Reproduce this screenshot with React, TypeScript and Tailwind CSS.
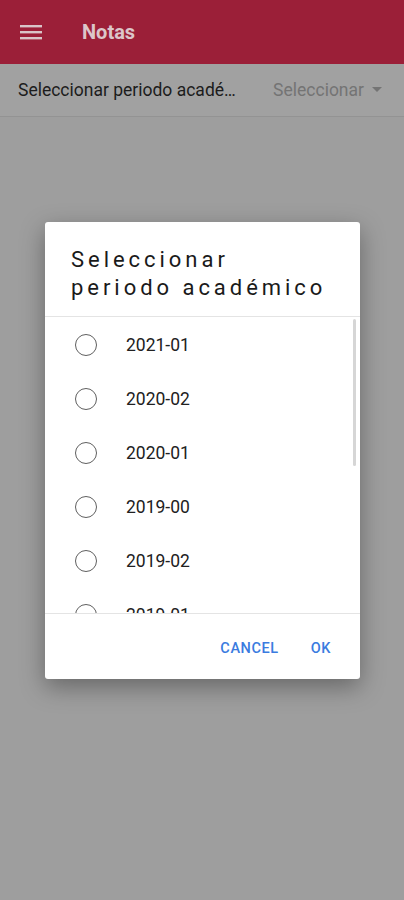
import { useState } from 'react'

const periods = ['2021-01', '2020-02', '2020-01', '2019-00', '2019-02', '2019-01', '2018-02', '2018-01']

export default function App() {
  const [selected, setSelected] = useState<string | null>(null)

  return (
    <main className="relative w-[404px] h-[900px] overflow-hidden bg-[#9e9e9e] font-['Roboto',sans-serif]">
      {/* App bar */}
      <header className="h-16 bg-[#9b1f38] flex items-center px-5 shadow-sm">
        <svg width="22" height="16" viewBox="0 0 22 16" className="shrink-0">
          <rect x="0" y="1" width="22" height="2.4" fill="#d9c4c8" />
          <rect x="0" y="7" width="22" height="2.4" fill="#d9c4c8" />
          <rect x="0" y="13" width="22" height="2.4" fill="#d9c4c8" />
        </svg>
        <h1 className="ml-10 text-[20px] font-bold text-[#dcc6ca]">Notas</h1>
      </header>

      {/* Period selector */}
      <div className="h-[53px] flex items-center justify-between pl-[18px] pr-[22px] border-b border-[#939393] bg-[#a1a1a1]">
        <span className="text-[17.5px] text-[#1c1c1c] w-[226px] truncate">Seleccionar periodo académico</span>
        <span className="flex items-center gap-2 text-[17.5px] text-[#747474]">
          Seleccionar
          <svg width="10" height="6" viewBox="0 0 10 6">
            <path d="M0 0 L10 0 L5 5 Z" fill="#747474" />
          </svg>
        </span>
      </div>

      {/* Dialog */}
      <div className="absolute left-[45px] top-[222px] w-[315px] bg-white rounded-[3px] shadow-[0_8px_24px_rgba(0,0,0,0.35)] flex flex-col">
        <h2 className="pl-[26px] pt-[24px] pb-[14px] text-[22px] leading-[28px] tracking-[0.18em] text-[#1a1a1a]">
          Seleccionar
          <br />
          periodo académico
        </h2>
        <div className="relative h-[298px] overflow-hidden border-t border-b border-[#e4e4e4]">
          <ul className="flex flex-col pt-[1px]">
            {periods.map((p) => (
              <li
                key={p}
                onClick={() => setSelected(p)}
                className="h-[54px] shrink-0 flex items-center pl-[30px] cursor-pointer"
              >
                <span className="w-[22px] h-[22px] rounded-full border-[1.8px] border-[#5f5f5f] flex items-center justify-center">
                  {selected === p && <span className="w-[10px] h-[10px] rounded-full bg-[#3a7be0]" />}
                </span>
                <span className="ml-[29px] text-[17.5px] text-[#212121]">{p}</span>
              </li>
            ))}
          </ul>
          <div className="absolute right-[4px] top-[2px] w-[3px] h-[147px] bg-[#d6d6d6] rounded-full" />
        </div>
        <div className="h-[65px] flex items-center justify-end gap-8 pr-[29px] pt-[4px]">
          <button className="text-[14.5px] font-medium tracking-[0.04em] text-[#3a7be0]">CANCEL</button>
          <button className="text-[14.5px] font-medium tracking-[0.04em] text-[#3a7be0]">OK</button>
        </div>
      </div>
    </main>
  )
}
